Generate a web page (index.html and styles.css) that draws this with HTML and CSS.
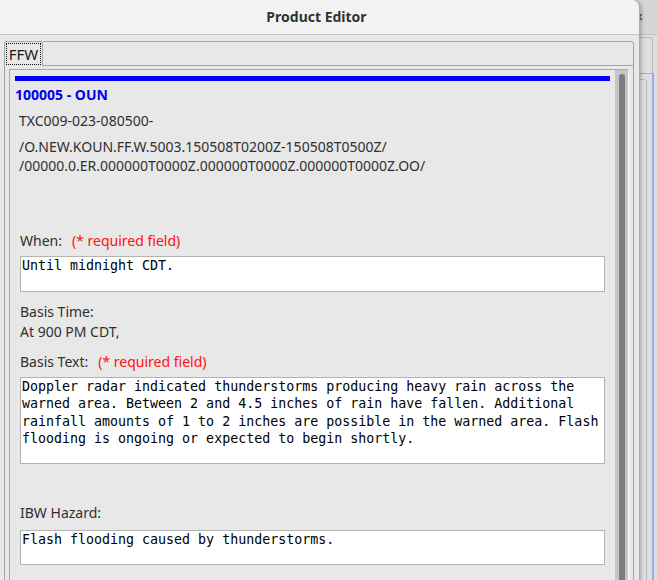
FILE: index.html
```html
<!DOCTYPE html>
<html lang="en">
<head>
<meta charset="utf-8"/>
<title>Product Editor</title>
<link rel="stylesheet" href="styles.css">
</head>
<body>
<div class="desktop">
  <div class="back-window">
    <div class="bw-titlebar">
      <svg class="bw-close" width="8" height="8" viewBox="0 0 8 8"><path d="M1 1L7 7M7 1L1 7" stroke="#5a5a5a" stroke-width="1.6"/></svg>
    </div>
    <div class="bw-body">
      <div class="bw-tabs"></div>
      <div class="bw-focus"><div class="bw-inner"></div></div>
    </div>
  </div>

  <div class="dialog">
    <div class="titlebar">Product Editor</div>
    <div class="dialog-body">
      <div class="tabpane">
        <div class="tabstrip">
          <div class="tab"><span class="tab-label">FFW</span></div>
          <div class="tab-fill"></div>
        </div>
        <div class="tab-content">
          <div class="scroll-panel">
            <div class="scroll-view">
              <div class="hazard-bar"></div>
              <div class="event-id">100005 - OUN</div>
              <div class="vtec-line">TXC009-023-080500-</div>
              <div class="vtec-code">/O.NEW.KOUN.FF.W.5003.150508T0200Z-150508T0500Z/<br>/00000.0.ER.000000T0000Z.000000T0000Z.000000T0000Z.OO/</div>

              <div class="fields">
                <div class="field-label when-label">When:<span class="req">(* required field)</span></div>
                <div class="textbox single">Until midnight CDT.</div>

                <div class="field-label basis-time">Basis Time:<br>At 900 PM CDT,</div>

                <div class="field-label basis-label">Basis Text:<span class="req">(* required field)</span></div>
                <div class="textbox multi">Doppler radar indicated thunderstorms producing heavy rain across the warned area. Between 2 and 4.5 inches of rain have fallen. Additional rainfall amounts of 1 to 2 inches are possible in the warned area. Flash flooding is ongoing or expected to begin shortly.</div>

                <div class="field-label ibw-label">IBW Hazard:</div>
                <div class="textbox single ibw-box">Flash flooding caused by thunderstorms.</div>
              </div>
            </div>
            <div class="scrollbar"><div class="thumb"></div></div>
          </div>
        </div>
      </div>
    </div>
  </div>
</div>
</body>
</html>
```

FILE: styles.css
```css
body {
  margin: 0;
  overflow: hidden;
  font-family: "Noto Sans", "DejaVu Sans", sans-serif;
  font-size: 14px;
  color: #2f2f2f;
}
.desktop {
  position: relative;
  width: 657px;
  height: 580px;
  overflow: hidden;
  background: #d9d9d9;
}

/* window behind the dialog */
.back-window {
  position: absolute;
  top: 0;
  left: 340px;
  width: 340px;
  height: 620px;
  background: #dfdfdf;
}
.bw-titlebar {
  height: 34px;
  border-bottom: 1px solid #c4c4c4;
  background: linear-gradient(to right, #e4e4e4, #d4d4d4);
  display: flex;
  align-items: center;
  justify-content: flex-end;
  padding-right: 37px;
}
.bw-body {
  padding: 2px 27px 0 0;
  display: flex;
  flex-direction: column;
  align-items: flex-end;
}
.bw-tabs {
  width: 60px;
  height: 36px;
  box-sizing: border-box;
  border: 1px solid #b9b9b9;
  border-bottom: none;
  border-radius: 4px 4px 0 0;
}
.bw-focus {
  width: 60px;
  height: 540px;
  box-sizing: border-box;
  margin-right: -1px;
  border-top: 1px solid #8eb1e6;
  border-right: 2px solid #8eb1e6;
  padding: 5px 5px 0 0;
  display: flex;
  justify-content: flex-end;
}
.bw-inner {
  width: 40px;
  height: 520px;
  border: 1px solid #b8b8b8;
  border-radius: 3px 3px 0 0;
  background: #e2e2e2;
}

/* dialog */
.dialog {
  position: absolute;
  top: 0;
  left: 0;
  width: 640px;
  height: 620px;
  box-sizing: border-box;
  background: #e8e8e8;
  border-right: 1px solid #ababab;
  border-top-right-radius: 8px;
  box-shadow: 1px 0 4px rgba(0, 0, 0, 0.3);
  overflow: hidden;
}
.titlebar {
  height: 35px;
  box-sizing: border-box;
  border-bottom: 1px solid #c2c2c2;
  background: #f3f3f3;
  line-height: 34px;
  text-align: center;
  padding-right: 6px;
  font-weight: bold;
  color: #2e3436;
}
.dialog-body {
  padding: 6px 5px 0 4px;
}
.tabstrip {
  display: flex;
  height: 25px;
}
.tab {
  width: 39px;
  box-sizing: border-box;
  border: 1px solid #a4a4a4;
  border-bottom: none;
  border-radius: 3px 3px 0 0;
  padding: 1px;
  display: flex;
}
.tab-label {
  flex: 1;
  border: 1px dotted #111;
  font-size: 15px;
  line-height: 20px;
  text-align: center;
  color: #1a1a1a;
}
.tab-fill {
  flex: 1;
  border: 1px solid #a4a4a4;
  border-left: none;
  border-top-right-radius: 3px;
}
.tab-content {
  border: 1px solid #a4a4a4;
  border-top: none;
  padding: 3px 4px 0 4px;
  height: 540px;
}
.scroll-panel {
  display: flex;
  height: 530px;
  border-top: 1px solid #a9a9a9;
  border-left: 1px solid #a9a9a9;
  border-right: 1px solid #fff;
}
.scroll-view {
  flex: 1;
}
.scrollbar {
  width: 13px;
  box-sizing: border-box;
  background: #c4c5c5;
  padding: 4px 3px 0 4px;
}
.thumb {
  height: 600px;
  background: #7b7e7e;
  border-radius: 3px 3px 0 0;
}

/* product content */
.hazard-bar {
  margin: 6px 5px 0;
  height: 5px;
  background: #0000ff;
}
.event-id {
  margin-top: 4px;
  padding-left: 5px;
  line-height: 20px;
  font-weight: bold;
  color: #0000f0;
}
.vtec-line {
  margin-top: 6px;
  padding-left: 9px;
  line-height: 20px;
}
.vtec-code {
  margin-top: 6px;
  padding-left: 9px;
  line-height: 19px;
}
.fields {
  padding: 0 10px;
}
.field-label {
  line-height: 20px;
}
.req {
  margin-left: 10px;
  color: #ff1010;
}
.when-label {
  margin-top: 56px;
}
.basis-time {
  margin-top: 10px;
}
.basis-label {
  margin-top: 10px;
}
.ibw-label {
  margin-top: 39px;
}
.textbox {
  margin-top: 5px;
  box-sizing: border-box;
  background: #fff;
  border: 1px solid #b3b3b3;
  padding: 0 1px;
  font-family: "DejaVu Sans Mono", monospace;
  font-size: 13.3px;
  line-height: 17.4px;
  color: #000;
}
.single {
  height: 36px;
}
.multi {
  height: 87px;
}
.ibw-box {
  margin-top: 7px;
  height: 35px;
}
```
